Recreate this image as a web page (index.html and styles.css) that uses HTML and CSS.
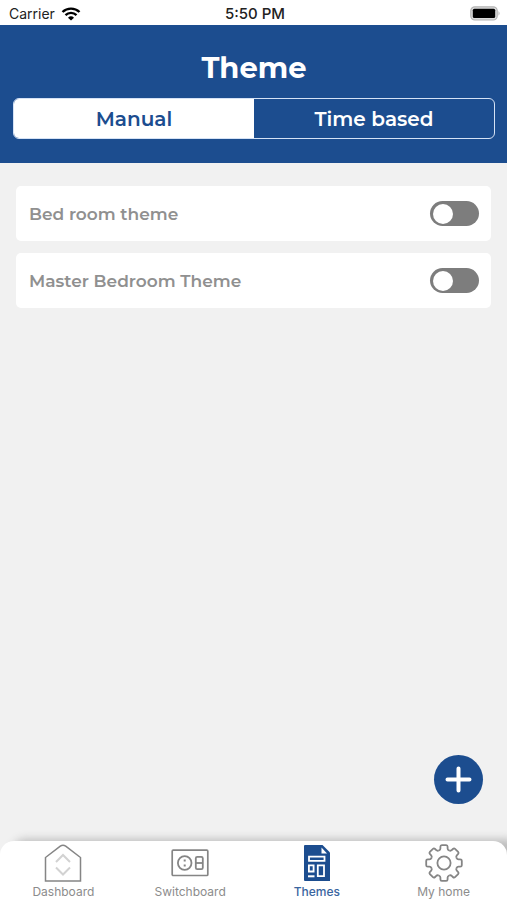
FILE: index.html
```html
<!DOCTYPE html>
<html lang="en">
<head>
  <meta charset="utf-8">
  <meta name="viewport" content="width=device-width, initial-scale=1">
  <title>Theme</title>
  <link rel="stylesheet" href="styles.css">
</head>
<body>
  <div class="status">
    <div class="status-left">
      <span>Carrier</span>
      <svg width="20" height="14" viewBox="0 0 20 14" aria-hidden="true">
        <path d="M1.500 5a12.300 12.300 0 0 1 17 0M4.500 8.100a8 8 0 0 1 11 0" fill="none" stroke="#000" stroke-width="2.400"/>
        <path d="M10 13.600 7 10.700a4.300 4.300 0 0 1 6 0z"/>
      </svg>
    </div>
    <span class="clock">5:50 PM</span>
    <svg class="battery" width="31" height="15" viewBox="0 0 31 15" aria-hidden="true">
      <rect x=".8" y=".8" width="26.400" height="13.200" rx="4" fill="#ddd" stroke="#b4b4b4" stroke-width="1.200"/>
      <rect x="2.800" y="2.800" width="22.400" height="9.200" rx="1.500"/>
      <path d="M28.500 5q2.200 2.400 0 4.800z" fill="#b4b4b4"/>
    </svg>
  </div>

  <header class="header">
    <h1>Theme</h1>
    <div class="segments">
      <button class="segment segment-active" type="button" aria-pressed="true">Manual</button>
      <button class="segment" type="button" aria-pressed="false">Time based</button>
    </div>
  </header>

  <main class="themes">
    <label class="card">
      <span>Bed room theme</span>
      <input class="toggle" type="checkbox" role="switch">
    </label>
    <label class="card">
      <span>Master Bedroom Theme</span>
      <input class="toggle" type="checkbox" role="switch">
    </label>
  </main>

  <div class="actions">
    <button class="add" type="button" aria-label="Add theme">
      <svg width="49" height="49" viewBox="0 0 49 49" aria-hidden="true">
        <path d="M24.500 13.500v22M13.500 24.500h22" stroke="#fff" stroke-width="4" stroke-linecap="round"/>
      </svg>
    </button>
  </div>

  <nav class="nav">
    <a class="nav-item" href="#dashboard">
      <svg width="38" height="38" viewBox="0 0 38 38" fill="none" aria-hidden="true">
        <path d="M1.500 37V13.500L16.300 2.200q2.700-2 5.400 0L36.500 13.500V37z" stroke="#858585" stroke-width="1.500"/>
        <path d="M12 18 19 11l7 7M12 23.500l7 7 7-7" stroke="#d2d2d2" stroke-width="2"/>
      </svg>
      <span>Dashboard</span>
    </a>
    <a class="nav-item" href="#switchboard">
      <svg width="38" height="38" viewBox="0 0 38 38" fill="none" stroke="#858585" stroke-width="1.700" aria-hidden="true">
        <rect x="1.200" y="6.200" width="35.600" height="25.300" rx="1"/>
        <circle cx="13.700" cy="19" r="6.800" stroke-width="1.800"/>
        <rect x="24.800" y="12.800" width="7" height="12.400" rx="1.500" stroke-width="1.800"/>
        <path d="M24.800 19h7" stroke-width="1.800"/>
        <path d="M13.700 15.500v2M13.700 20.500v2" stroke-width="2"/>
      </svg>
      <span>Switchboard</span>
    </a>
    <a class="nav-item nav-active" href="#themes" aria-current="page">
      <svg width="38" height="38" viewBox="0 0 38 38" fill="none" aria-hidden="true">
        <path d="M7 1h17.500L32 8.500V37H7q-1 0-1-1V2q0-1 1-1z" fill="#1c4d8f"/>
        <path d="M23.500 3.500v6H29z" fill="#fff"/>
        <path d="M11 12.600h15.500v4.300H11zM10.900 21.300h4.700v6.200h-4.700zM19.800 21.300h6.200v10.900h-6.200z" stroke="#fff" stroke-width="1.800"/>
        <path d="M10 32.300h6.500" stroke="#fff" stroke-width="2"/>
      </svg>
      <span>Themes</span>
    </a>
    <a class="nav-item" href="#home">
      <svg width="38" height="38" viewBox="-19 -19 38 38" fill="none" stroke="#858585" stroke-width="1.800" aria-hidden="true">
        <defs>
          <path id="tooth" d="M-5.200-12.500Q-3.600-13.200-3.600-14.500V-16.200Q-3.600-17.800-2.200-17.800H2.200Q3.600-17.800 3.600-16.200V-14.500Q3.600-13.200 5.200-12.500"/>
        </defs>
        <use href="#tooth"/>
        <use href="#tooth" transform="rotate(45)"/>
        <use href="#tooth" transform="rotate(90)"/>
        <use href="#tooth" transform="rotate(135)"/>
        <use href="#tooth" transform="rotate(180)"/>
        <use href="#tooth" transform="rotate(225)"/>
        <use href="#tooth" transform="rotate(270)"/>
        <use href="#tooth" transform="rotate(315)"/>
        <circle r="6.600"/>
      </svg>
      <span>My home</span>
    </a>
  </nav>
</body>
</html>
```
FILE: styles.css
```css
* {
  box-sizing: border-box;
}

body {
  margin: 0;
  min-height: 100vh;
  display: flex;
  flex-direction: column;
  background: #f1f1f1;
  font-family: Montserrat, Inter, sans-serif;
}

button {
  font-family: inherit;
  border: 0;
  padding: 0;
  cursor: pointer;
}

svg {
  display: block;
}

.status {
  display: grid;
  grid-template-columns: 1fr auto 1fr;
  align-items: center;
  padding: 2px 6px 0 9px;
  height: 25px;
  background: #fff;
  color: #222;
  font: 14px/22px Inter, sans-serif;
}

.status-left {
  display: flex;
  align-items: center;
  gap: 6px;
}

.clock {
  font-size: 15px;
  font-weight: 500;
}

.battery {
  justify-self: end;
}

.header {
  padding: 25px 12px 24px 13px;
  background: #1c4d8f;
  color: #fff;
}

h1 {
  margin: 0 0 12px;
  font-size: 29px;
  line-height: 36px;
  font-weight: 700;
  text-align: center;
}

.segments {
  display: grid;
  grid-template-columns: 1fr 1fr;
  height: 41px;
  border: 1px solid #d5e2f5;
  border-radius: 6px;
  overflow: hidden;
}

.segment {
  background: transparent;
  color: #fff;
  font-size: 20px;
  font-weight: 600;
}

.segment-active {
  background: #fff;
  color: #1c4d8f;
}

.themes {
  flex: 1;
  display: flex;
  flex-direction: column;
  gap: 12px;
  padding: 23px 16px;
}

.card {
  display: flex;
  align-items: center;
  justify-content: space-between;
  min-height: 55px;
  padding: 12px 12px 12px 13px;
  border-radius: 5px;
  background: #fff;
  color: #909090;
  font-size: 17px;
  font-weight: 600;
}

.toggle {
  appearance: none;
  display: flex;
  align-items: center;
  width: 49px;
  height: 25px;
  margin: 0;
  padding: 3px;
  border-radius: 13px;
  background: #7d7d7d;
  cursor: pointer;
}

.toggle::before {
  content: "";
  width: 20px;
  height: 20px;
  border-radius: 50%;
  background: #fff;
}

.toggle:checked {
  justify-content: flex-end;
  background: #1c4d8f;
}

.actions {
  display: flex;
  justify-content: flex-end;
  padding: 0 24px 37px;
}

.add {
  width: 49px;
  height: 49px;
  border-radius: 50%;
  background: #1c4d8f;
}

.nav {
  display: grid;
  grid-template-columns: repeat(4, 1fr);
  padding: 3px 0 0;
  height: 59px;
  border-radius: 14px 14px 0 0;
  background: #fff;
  box-shadow: 12px -2px 8px #bdbdbd;
}

.nav-item {
  display: flex;
  flex-direction: column;
  align-items: center;
  color: #8c8c8c;
  font: 12px/20px Inter, sans-serif;
  text-decoration: none;
}

.nav-active {
  color: #3a65a0;
  font-weight: 500;
}
```
